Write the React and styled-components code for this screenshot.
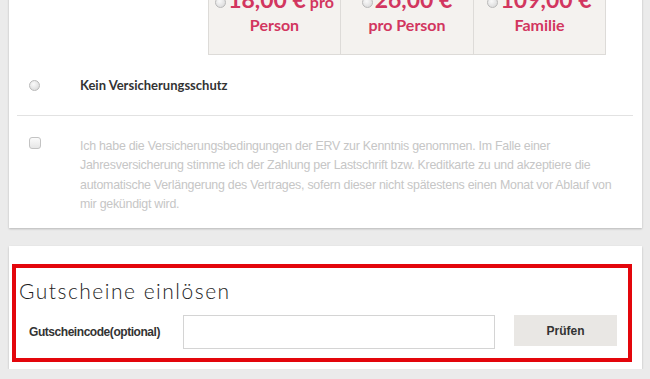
import React from "react";
import styled, { createGlobalStyle } from "styled-components";

const Global = createGlobalStyle`
  html, body {
    margin: 0;
    padding: 0;
    background: #ebebeb;
    overflow: hidden;
  }
  body {
    font-family: "Liberation Sans", Arial, sans-serif;
  }
`;

const Page = styled.div`
  padding: 0 8px 0 9px;
`;

const Card = styled.div`
  display: flow-root;
  background: #fff;
  box-shadow: 0 1px 2px rgba(0, 0, 0, 0.22);
  margin-top: ${(p) => p.$top || 0}px;
`;

const PriceTable = styled.div`
  display: grid;
  grid-template-columns: 133px 133px 132px;
  margin-left: 199px;
  width: 398px;
`;

const PriceCell = styled.div`
  background: #f4f2ef;
  border: 1px solid #dddbd8;
  border-left-width: ${(p) => (p.$first ? 1 : 0)}px;
  height: 79px;
  box-sizing: border-box;
  display: flex;
  flex-direction: column;
  align-items: center;
  padding-top: 8px;
  font-family: Lato, "Open Sans", sans-serif;
  color: #d2365f;
`;

const PriceLine = styled.div`
  display: flex;
  align-items: baseline;
  height: 29px;
  white-space: nowrap;
`;

const Amount = styled.span`
  font-size: 23px;
  font-weight: 700;
`;

const Unit = styled.span`
  font-size: 16px;
  font-weight: 700;
  margin-left: 4px;
`;

const SubLine = styled.div`
  font-size: 16px;
  font-weight: 700;
  line-height: 22px;
`;

const Radio = styled.span`
  display: inline-block;
  width: 11px;
  height: 11px;
  border-radius: 50%;
  border: 1px solid #b9b9b9;
  background: radial-gradient(circle at 40% 35%, #fafafa, #d4d4d4);
  box-sizing: border-box;
  margin-right: ${(p) => p.$gap || 0}px;
  flex-shrink: 0;
`;

const Check = styled.span`
  display: inline-block;
  width: 12px;
  height: 12px;
  border-radius: 3px;
  border: 1px solid #c3c3c3;
  background: linear-gradient(#fbfbfb, #e6e6e6);
  box-sizing: border-box;
  flex-shrink: 0;
`;

const OptionRow = styled.div`
  display: flex;
  align-items: center;
  padding: 22px 0 22px 20px;
  gap: 40px;
`;

const OptionLabel = styled.span`
  font-family: Lato, "Open Sans", sans-serif;
  font-weight: 700;
  font-size: 13px;
  color: #333;
`;

const Divider = styled.hr`
  border: 0;
  border-top: 1px solid #e2e2e2;
  margin: 0 9px 0 8px;
`;

const ConsentRow = styled.div`
  display: flex;
  align-items: flex-start;
  padding: 21px 0 14px 20px;
  gap: 39px;
`;

const ConsentText = styled.p`
  margin: 0;
  font-size: 12.4px;
  line-height: 19.3px;
  color: #c6c6c6;
  letter-spacing: -0.25px;
`;

const Highlight = styled.section`
  border: 4px solid #e3060c;
  margin: 18px 10px 7px 3px;
  padding: 10px 0 9px 3px;
`;

const Heading = styled.h2`
  margin: 0 0 11px;
  font-family: Lato, "Open Sans", sans-serif;
  font-weight: 300;
  font-size: 21px;
  line-height: 26px;
  color: #1e1e1e;
  letter-spacing: 1.5px;
`;

const FormRow = styled.div`
  display: flex;
  align-items: center;
  padding-left: 10px;
`;

const Label = styled.label`
  width: 154px;
  font-size: 12px;
  font-weight: 700;
  color: #333;
  letter-spacing: -0.45px;
`;

const CodeInput = styled.input`
  width: 312px;
  height: 34px;
  box-sizing: border-box;
  border: 1px solid #d4d4d4;
  background: #fff;
  outline: none;
  margin-right: 19px;
`;

const CheckButton = styled.button`
  width: 103px;
  height: 31px;
  margin-top: -3px;
  border: 0;
  background: #e9e7e4;
  font-family: "Liberation Sans", Arial, sans-serif;
  font-weight: 700;
  font-size: 12px;
  color: #333;
`;

const prices = [
  { amount: "18,00 €", unit: "pro", sub: "Person" },
  { amount: "26,00 €", sub: "pro Person" },
  { amount: "109,00 €", sub: "Familie" },
];

export default function App() {
  return (
    <Page>
      <Global />
      <Card $top={-24}>
        <PriceTable>
          {prices.map((p, i) => (
            <PriceCell key={p.amount} $first={i === 0}>
              <PriceLine>
                <Radio $gap={2} />
                <Amount>{p.amount}</Amount>
                {p.unit && <Unit>{p.unit}</Unit>}
              </PriceLine>
              <SubLine>{p.sub}</SubLine>
            </PriceCell>
          ))}
        </PriceTable>
        <OptionRow>
          <Radio />
          <OptionLabel>Kein Versicherungsschutz</OptionLabel>
        </OptionRow>
        <Divider />
        <ConsentRow>
          <Check />
          <ConsentText>
            Ich habe die Versicherungsbedingungen der ERV zur Kenntnis genommen. Im Falle einer
            <br />
            Jahresversicherung stimme ich der Zahlung per Lastschrift bzw. Kreditkarte zu und akzeptiere die
            <br />
            automatische Verlängerung des Vertrages, sofern dieser nicht spätestens einen Monat vor Ablauf von
            <br />
            mir gekündigt wird.
          </ConsentText>
        </ConsentRow>
      </Card>
      <Card $top={18}>
        <Highlight>
          <Heading>Gutscheine einlösen</Heading>
          <FormRow>
            <Label>Gutscheincode(optional)</Label>
            <CodeInput type="text" />
            <CheckButton type="button">Prüfen</CheckButton>
          </FormRow>
        </Highlight>
      </Card>
    </Page>
  );
}
